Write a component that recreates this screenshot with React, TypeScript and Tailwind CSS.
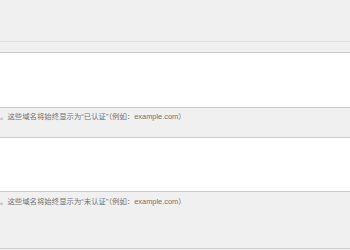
import React from "react";

const font = { fontFamily: '"Liberation Sans", "Noto Sans CJK SC", sans-serif' };

export default function App() {
  return (
    <div className="w-[350px] h-[250px] overflow-hidden bg-[#f0f0f0]" style={font}>
      <div className="h-[41px]" />
      <div className="h-px bg-[#dedede]" />
      <div className="h-[10px]" />
      <div className="h-[56px] bg-white border-y border-[#cccccc]" />
      <div className="h-[29px] pt-[4px] text-[7.4px] leading-[10px] text-[#707070] whitespace-nowrap">
        。这些域名将始终显示为“已认证”（例如：example.com）
      </div>
      <div className="h-[55px] bg-white border-y border-[#cccccc]" />
      <div className="h-[57px] pt-[5px] text-[7.4px] leading-[10px] text-[#707070] whitespace-nowrap border-b border-[#cccccc]">
        。这些域名将始终显示为“未认证”（例如：example.com）
      </div>
    </div>
  );
}
